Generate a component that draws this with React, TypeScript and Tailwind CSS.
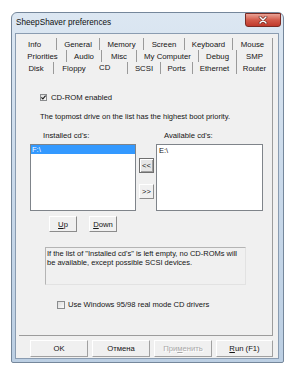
import React from "react";

type T = { label: string; cls: string };

const row1: T[] = [
  { label: "Info", cls: "w-[38px] pr-[6px] justify-center border-r" },
  { label: "General", cls: "w-[43px] justify-center border-r" },
  { label: "Memory", cls: "w-[44px] justify-center border-r" },
  { label: "Screen", cls: "w-[41px] justify-center border-r" },
  { label: "Keyboard", cls: "w-[48px] justify-center border-r" },
  { label: "Mouse", cls: "w-[40px] justify-center border-r" },
];
const row2: T[] = [
  { label: "Priorities", cls: "w-[48px] justify-center border-r" },
  { label: "Audio", cls: "w-[35px] justify-center border-r" },
  { label: "Misc", cls: "w-[35px] justify-center border-r" },
  { label: "My Computer", cls: "w-[62px] justify-center border-r" },
  { label: "Debug", cls: "w-[38px] justify-center border-r" },
  { label: "SMP", cls: "w-[36px] justify-center border-r" },
];
const row3: T[] = [
  { label: "Disk", cls: "w-[35px] justify-center border-r" },
  { label: "Floppy", cls: "w-[40px] justify-center" },
  { label: "CD", cls: "w-[34px] justify-start pl-[5px] pb-[2px] border-r" },
  { label: "SCSI", cls: "w-[33px] justify-center border-r" },
  { label: "Ports", cls: "w-[32px] justify-center border-r" },
  { label: "Ethernet", cls: "w-[44px] justify-center border-r" },
  { label: "Router", cls: "w-[36px] justify-center border-r" },
];

function TabRow({ tabs }: { tabs: T[] }) {
  return (
    <div className="flex h-[12px] w-[254px] text-[7.8px]">
      {tabs.map((t) => (
        <div
          key={t.label}
          className={`h-full flex items-center border-[#9a9a9a] whitespace-nowrap ${t.cls}`}
        >
          {t.label}
        </div>
      ))}
    </div>
  );
}

function Check({ checked, size }: { checked?: boolean; size: "s" | "m" }) {
  return (
    <div
      className={`${size === "s" ? "w-[7px] h-[7px]" : "w-[8px] h-[8px]"} border border-[#8a8c8e] bg-gradient-to-br from-[#dcdcdc] to-[#fbfbfb] flex items-center justify-center shrink-0`}
    >
      {checked && (
        <svg width="5" height="5" viewBox="0 0 5 5">
          <path d="M0.4 2.4 L1.9 3.9 L4.6 0.7" stroke="#1a1a1a" strokeWidth="1.1" fill="none" />
        </svg>
      )}
    </div>
  );
}

function BottomBtn({ children, w, disabled }: { children: React.ReactNode; w: string; disabled?: boolean }) {
  return (
    <div
      className={`${w} h-[17px] flex items-center justify-center border border-t-white border-l-white border-r-[#a0a0a0] border-b-[#a0a0a0] bg-[#f0f0f0] whitespace-nowrap ${disabled ? "text-[#a8a8a8]" : ""}`}
    >
      {children}
    </div>
  );
}

export default function App() {
  return (
    <div className="w-[300px] h-[370px] bg-white overflow-hidden font-['Liberation_Sans',Arial,sans-serif] text-[#151515] text-[7.5px] leading-[9px]">
      <div className="ml-[11px] mt-[12px] w-[273px] h-[351px] border border-[#75879b] rounded-t-[6px] rounded-b-[2px] bg-gradient-to-b from-[#dce7f2] via-[#c9d9ea] to-[#bccfe3] flex flex-col pl-[3px] pr-[2px]">
        {/* Title bar */}
        <div className="h-[20px] flex items-start shrink-0">
          <div className="self-center text-[8.2px] leading-[10px] text-[#101010] pl-[1px]">SheepShaver preferences</div>
          <div className="ml-auto w-[36px] h-[14px] rounded-b-[3px] border border-[#7a2b24] bg-gradient-to-b from-[#e9a296] via-[#d25a4a] to-[#c0392b] flex items-center justify-center">
            <svg width="10" height="8" viewBox="0 0 10 8">
              <path d="M2 1 L8 7 M8 1 L2 7" stroke="#5a1a14" strokeWidth="2.6" strokeLinecap="round" />
              <path d="M2 1 L8 7 M8 1 L2 7" stroke="#ffffff" strokeWidth="1.5" strokeLinecap="round" />
            </svg>
          </div>
        </div>

        {/* Client area */}
        <div className="w-[264px] h-[326px] border border-[#8a9cb1] bg-[#f0f0f0] flex flex-col pl-[3px] pt-[4px] shrink-0">
          <TabRow tabs={row1} />
          <TabRow tabs={row2} />
          <TabRow tabs={row3} />

          {/* Tab panel */}
          <div className="w-[254px] h-[262px] border-r border-b border-[#9c9c9c] flex flex-col shrink-0">
            <div className="mt-[19px] ml-[21px] h-[9px] flex items-center gap-[4px]">
              <Check checked size="s" />
              <span className="text-[7.7px]">CD-ROM enabled</span>
            </div>
            <div className="mt-[10px] ml-[21px] h-[9px] whitespace-nowrap">
              The topmost drive on the list has the highest boot priority.
            </div>
            <div className="mt-[10px] h-[9px] flex whitespace-nowrap text-[7.7px]">
              <div className="ml-[24px] w-[121px]">Installed cd's:</div>
              <div>Available cd's:</div>
            </div>
            <div className="mt-[4px] ml-[11px] flex">
              <div className="w-[106px] h-[67px] border border-[#7f848a] bg-white p-0">
                <div className="h-[9px] bg-[#3399ff] text-white pl-[1px]">F:\</div>
              </div>
              <div className="ml-[3px] w-[15px] flex flex-col pt-[14px]">
                <div className="h-[15px] border border-[#6f6f6f] bg-[#e6e6e6] flex items-center justify-center shadow-[inset_1px_1px_0_#ffffff,inset_-1px_-1px_0_#a0a0a0]">
                  &lt;&lt;
                </div>
                <div className="mt-[11px] h-[15px] border border-t-white border-l-white border-r-[#8c8c8c] border-b-[#8c8c8c] bg-[#f0f0f0] flex items-center justify-center">
                  &gt;&gt;
                </div>
              </div>
              <div className="ml-[2px] w-[107px] h-[67px] border border-[#7f848a] bg-white pl-[2px] pt-[1px]">
                E:\
              </div>
            </div>
            <div className="mt-[5px] ml-[30px] flex gap-[12px] text-[7.7px]">
              <div className="w-[28px] h-[16px] border border-t-white border-l-white border-r-[#8c8c8c] border-b-[#8c8c8c] flex items-center justify-center">
                <span><span className="underline">U</span>p</span>
              </div>
              <div className="w-[28px] h-[16px] border border-t-white border-l-white border-r-[#8c8c8c] border-b-[#8c8c8c] flex items-center justify-center">
                <span><span className="underline">D</span>own</span>
              </div>
            </div>
            <div className="mt-[15px] ml-[26px] w-[201px] h-[38px] border border-t-[#b4b4b4] border-l-[#b4b4b4] border-r-[#e2e2e2] border-b-[#e2e2e2] pl-[1px] pt-[2px] leading-[8.5px] whitespace-nowrap">
              If the list of "Installed cd's" is left empty, no CD-ROMs will
              <br />
              be available, except possible SCSI devices.
            </div>
            <div className="mt-[15px] ml-[38px] h-[9px] flex items-center gap-[3px]">
              <Check size="m" />
              <span className="text-[7.6px]">Use Windows 95/98 real mode CD drivers</span>
            </div>
          </div>

          {/* Bottom buttons */}
          <div className="mt-[4px] ml-[11px] flex gap-[4px] text-[7.7px]">
            <BottomBtn w="w-[58px]">OK</BottomBtn>
            <BottomBtn w="w-[58px]">Отмена</BottomBtn>
            <BottomBtn w="w-[58px]" disabled>
              <span className="[text-shadow:1px_1px_0_#ffffff]">При<span className="underline">м</span>енить</span>
            </BottomBtn>
            <BottomBtn w="w-[57px]">
              <span><span className="underline">R</span>un (F1)</span>
            </BottomBtn>
          </div>
        </div>
      </div>
    </div>
  );
}
